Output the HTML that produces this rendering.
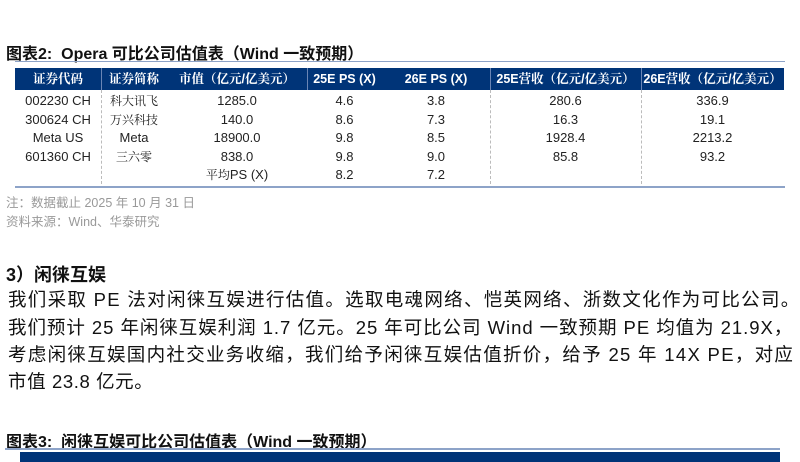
<!DOCTYPE html>
<html><head><meta charset="utf-8"><style>
*{margin:0;padding:0;box-sizing:border-box}
body{width:800px;height:462px;background:#fff;position:relative;overflow:hidden;font-family:"Liberation Sans","Noto Sans CJK SC",sans-serif;color:#111}
.a{position:absolute;white-space:nowrap}
.t{font-weight:bold;font-size:16px}
.hr{position:absolute;left:15px;width:770px;height:2px;background:#8da3c8}
.bar{position:absolute;background:#003478}
.h{position:absolute;top:68px;height:22px;line-height:22px;color:#fff;font-weight:bold;font-size:12.5px;text-align:center;font-family:"Liberation Sans","Noto Serif CJK SC",sans-serif}
.c{position:absolute;font-size:13px;text-align:center;color:#222}
.s{font-family:"Noto Serif CJK SC",serif;font-size:12px}
.v{position:absolute;top:90px;height:60px;border-left:1px dashed #bbb}
.n{font-size:12.5px;color:#999}
.p{font-size:18.5px;left:8px}
</style></head><body>
<div class="a t" style="left:6px;top:40px">图表2:&nbsp;&nbsp;Opera 可比公司估值表（Wind 一致预期）</div>
<div class="hr" style="top:61px;height:1px"></div>
<div class="bar" style="left:15px;top:68px;width:769px;height:22px"></div>
<div class="h" style="left:15px;width:86px">证券代码</div>
<div class="h" style="left:101px;width:66px">证券简称</div>
<div class="h" style="left:167px;width:140px">市值（亿元/亿美元）</div>
<div class="h" style="left:307px;width:75px">25E PS (X)</div>
<div class="h" style="left:382px;width:108px">26E PS (X)</div>
<div class="h" style="left:490px;width:151px">25E营收（亿元/亿美元）</div>
<div class="h" style="left:641px;width:143px">26E营收（亿元/亿美元）</div>
<div style="position:absolute;left:101px;top:68px;width:1px;height:22px;background:#6a85b5"></div>
<div style="position:absolute;left:307px;top:68px;width:1px;height:22px;background:#6a85b5"></div>
<div style="position:absolute;left:490px;top:68px;width:1px;height:22px;background:#6a85b5"></div>
<div style="position:absolute;left:641px;top:68px;width:1px;height:22px;background:#6a85b5"></div>
<div class="v" style="left:101px;height:94px"></div>
<div class="v" style="left:490px;height:94px"></div>
<div class="v" style="left:641px;height:94px"></div>
<div class="c" style="left:15px;width:86px;top:92px;line-height:18.5px">002230 CH<br>300624 CH<br>Meta US<br>601360 CH</div>
<div class="c" style="left:101px;width:66px;top:92px;line-height:18.5px"><span class="s">科大讯飞</span><br><span class="s">万兴科技</span><br>Meta<br><span class="s">三六零</span></div>
<div class="c" style="left:167px;width:140px;top:92px;line-height:18.5px">1285.0<br>140.0<br>18900.0<br>838.0<br><span class="s">平均</span>PS (X)</div>
<div class="c" style="left:307px;width:75px;top:92px;line-height:18.5px">4.6<br>8.6<br>9.8<br>9.8<br>8.2</div>
<div class="c" style="left:382px;width:108px;top:92px;line-height:18.5px">3.8<br>7.3<br>8.5<br>9.0<br>7.2</div>
<div class="c" style="left:490px;width:151px;top:92px;line-height:18.5px">280.6<br>16.3<br>1928.4<br>85.8</div>
<div class="c" style="left:641px;width:143px;top:92px;line-height:18.5px">336.9<br>19.1<br>2213.2<br>93.2</div>
<div class="hr" style="top:186px"></div>
<div class="a n" style="left:6px;top:192px">注：数据截止 2025 年 10 月 31 日</div>
<div class="a n" style="left:6px;top:211px">资料来源：Wind、华泰研究</div>
<div class="a" style="left:6px;top:261px;font-weight:bold;font-size:18px">3）闲徕互娱</div>
<div class="a p" style="top:286px;letter-spacing:1.3px">我们采取 PE 法对闲徕互娱进行估值。选取电魂网络、恺英网络、浙数文化作为可比公司。</div>
<div class="a p" style="top:314px;letter-spacing:0.95px">我们预计 25 年闲徕互娱利润 1.7 亿元。25 年可比公司 Wind 一致预期 PE 均值为 21.9X，</div>
<div class="a p" style="top:341px;letter-spacing:1.3px">考虑闲徕互娱国内社交业务收缩，我们给予闲徕互娱估值折价，给予 25 年 14X PE，对应</div>
<div class="a p" style="top:368px;letter-spacing:0.6px">市值 23.8 亿元。</div>
<div class="a t" style="left:6px;top:428px">图表3:&nbsp;&nbsp;闲徕互娱可比公司估值表（Wind 一致预期）</div>
<div class="hr" style="top:448px;left:5px;width:775px"></div>
<div class="bar" style="left:20px;top:452px;width:760px;height:10px"></div>
</body></html>
